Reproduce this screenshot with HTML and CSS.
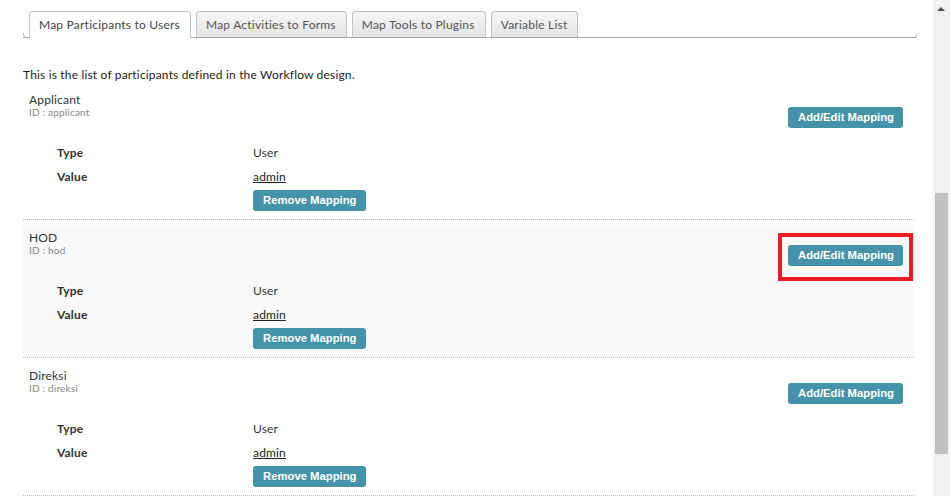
FILE: index.html
```html
<!DOCTYPE html>
<html>
<head>
<meta charset="utf-8">
<link rel="stylesheet" href="styles.css">
</head>
<body>
<div class="frame">
  <div class="page">
    <ul class="tabs">
      <li class="tab active">Map Participants to Users</li>
      <li class="tab">Map Activities to Forms</li>
      <li class="tab">Map Tools to Plugins</li>
      <li class="tab">Variable List</li>
    </ul>
    <p class="desc">This is the list of participants defined in the Workflow design.</p>

    <div class="participant">
      <div class="p-head">
        <div class="p-name">
          <div class="name">Applicant</div>
          <div class="pid">ID : applicant</div>
        </div>
        <div class="btn-wrap"><span class="btn">Add/Edit Mapping</span></div>
      </div>
      <div class="rows">
        <div class="row"><span class="label">Type</span><span class="val">User</span></div>
        <div class="row"><span class="label">Value</span><span class="val"><a class="link">admin</a></span></div>
        <div class="row-btn"><span class="btn">Remove Mapping</span></div>
      </div>
    </div>

    <div class="participant alt">
      <div class="p-head">
        <div class="p-name">
          <div class="name">HOD</div>
          <div class="pid">ID : hod</div>
        </div>
        <div class="btn-wrap highlight"><span class="btn">Add/Edit Mapping</span></div>
      </div>
      <div class="rows">
        <div class="row"><span class="label">Type</span><span class="val">User</span></div>
        <div class="row"><span class="label">Value</span><span class="val"><a class="link">admin</a></span></div>
        <div class="row-btn"><span class="btn">Remove Mapping</span></div>
      </div>
    </div>

    <div class="participant">
      <div class="p-head">
        <div class="p-name">
          <div class="name">Direksi</div>
          <div class="pid">ID : direksi</div>
        </div>
        <div class="btn-wrap"><span class="btn">Add/Edit Mapping</span></div>
      </div>
      <div class="rows">
        <div class="row"><span class="label">Type</span><span class="val">User</span></div>
        <div class="row"><span class="label">Value</span><span class="val"><a class="link">admin</a></span></div>
        <div class="row-btn"><span class="btn">Remove Mapping</span></div>
      </div>
    </div>
  </div>
  <div class="scrollbar">
    <div class="arrow"></div>
    <div class="thumb"></div>
  </div>
</div>
</body>
</html>
```

FILE: styles.css
```css
html, body {
  margin: 0;
  padding: 0;
  height: 100%;
  overflow: hidden;
  background: #fff;
}
body {
  font-family: "Lato", "Open Sans", sans-serif;
  font-size: 12px;
  letter-spacing: 0.17px;
  color: #333;
}
.frame {
  display: flex;
  height: 496px;
}
.page {
  flex: 1;
  padding: 11px 16px 0 23px;
  min-width: 0;
}
.tabs {
  list-style: none;
  margin: 0;
  padding: 0 0 0 6px;
  height: 26px;
  display: flex;
  align-items: flex-end;
  gap: 5px;
  border-bottom: 1px solid #a9a9a9;
  position: relative;
}
.tabs::before {
  content: "";
  position: absolute;
  left: 0;
  bottom: -1px;
  width: 4px;
  height: 4px;
  border-left: 1px solid #b5b5b5;
  border-bottom: 1px solid #a9a9a9;
  border-bottom-left-radius: 4px;
}
.tabs::after {
  content: "";
  position: absolute;
  right: 0;
  bottom: -1px;
  width: 3px;
  height: 3px;
  border-right: 1px solid #c5c5c5;
  border-bottom: 1px solid #a9a9a9;
  border-bottom-right-radius: 3px;
}
.tab {
  height: 25px;
  line-height: 25px;
  padding: 0 10px 0 9px;
  border: 1px solid #c2c2c2;
  border-bottom: none;
  border-radius: 4px 4px 0 0;
  background: linear-gradient(#f6f6f6, #e4e4e4);
  color: #555;
  letter-spacing: 0.22px;
  white-space: nowrap;
}
.tab.active {
  background: #fff;
  height: 26px;
  margin-bottom: -1px;
  color: #444;
}
.desc {
  margin: 30px 0 0 0;
  line-height: 14px;
  color: #222;
}
.participant {
  margin: 5px 3px 0 0;
  padding: 5px 11px 8px 6px;
  border-bottom: 1px dotted #bbb;
}
.participant + .participant {
  margin-top: 5px;
}
.participant.alt {
  background: #f9f9f9;
}
.p-head {
  display: flex;
  justify-content: space-between;
  align-items: flex-start;
}
.name {
  line-height: 15px;
  color: #333;
}
.pid {
  font-size: 10px;
  letter-spacing: 0.2px;
  line-height: 11px;
  color: #888;
}
.btn-wrap {
  margin-top: 15px;
  position: relative;
}
.btn-wrap.highlight::after {
  content: "";
  position: absolute;
  top: -12px;
  left: -10px;
  right: -10px;
  bottom: -15px;
  border: 4px solid #ec1c24;
}
.btn {
  display: inline-block;
  vertical-align: top;
  height: 21px;
  line-height: 21px;
  padding: 0 9px 0 10px;
  background: #4593a9;
  color: #fff;
  border-radius: 3px;
  font-family: "Liberation Sans", Arial, sans-serif;
  font-weight: bold;
  font-size: 11.3px;
  letter-spacing: 0;
  white-space: nowrap;
}
.rows {
  margin-top: 14px;
  padding-left: 28px;
}
.row {
  display: flex;
  height: 24px;
  line-height: 22px;
}
.label {
  width: 196px;
  font-weight: bold;
  color: #333;
}
.val {
  color: #333;
}
.link {
  color: #222;
  text-decoration: underline;
}
.row-btn {
  padding-left: 196px;
  margin-top: 0;
  height: 21px;
}
.scrollbar {
  width: 17px;
  flex: none;
  background: #f1f1f1;
  position: relative;
}
.arrow {
  position: absolute;
  top: 7px;
  left: 4px;
  width: 0;
  height: 0;
  border-left: 4px solid transparent;
  border-right: 4px solid transparent;
  border-bottom: 4px solid #505050;
}
.thumb {
  position: absolute;
  left: 2px;
  top: 193px;
  width: 13px;
  height: 261px;
  background: #c1c1c1;
}
```
